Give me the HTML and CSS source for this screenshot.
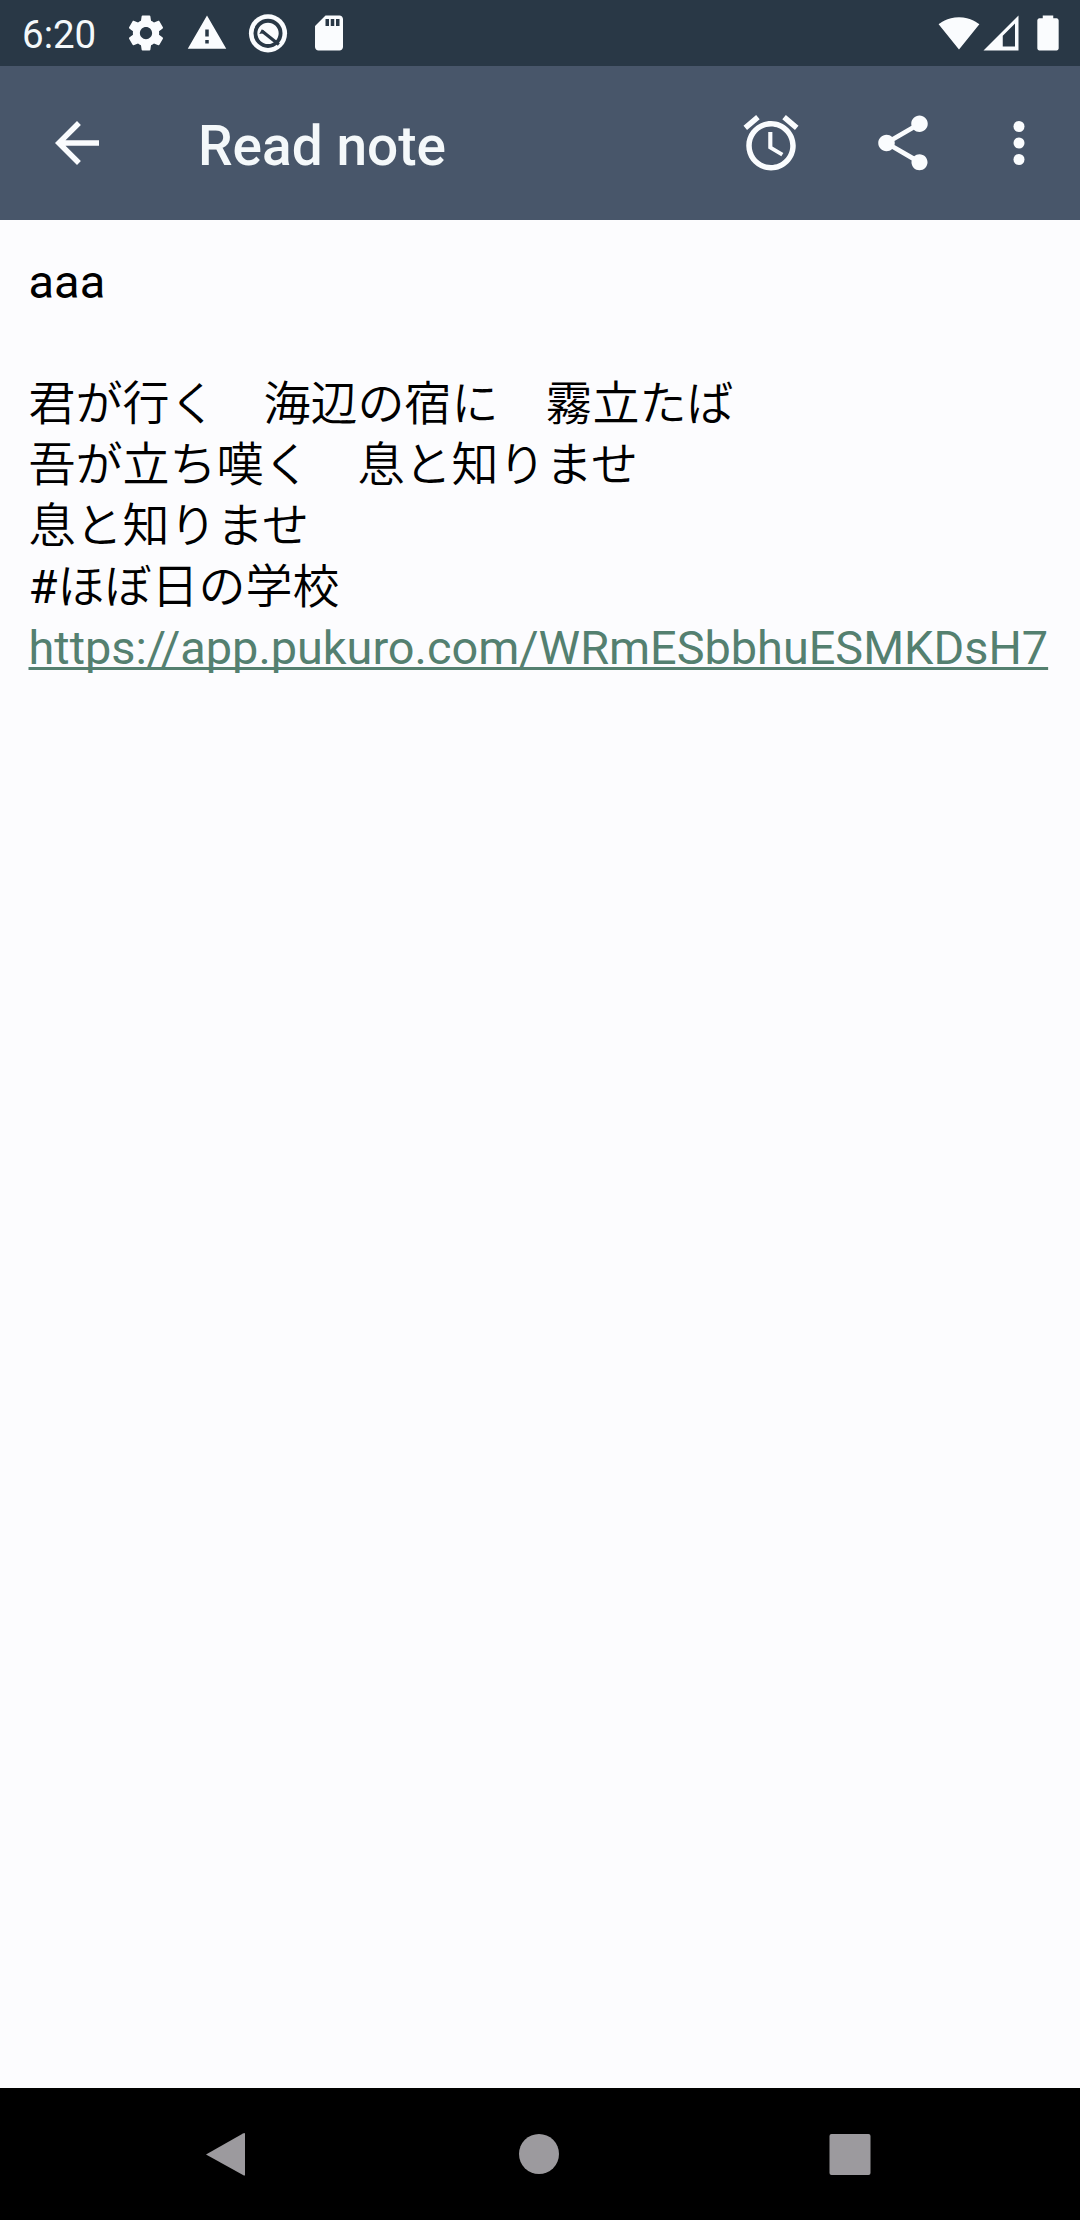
FILE: index.html
```html
<!DOCTYPE html>
<html lang="ja">
<head>
<meta charset="utf-8">
<title>Read note</title>
<link rel="stylesheet" href="styles.css">
</head>
<body>
<div class="screen">
  <header class="status">
    <span class="clock">6:20</span>
    <div class="notifications">
      <svg class="glyph" viewBox="0 0 24 24"><path d="M19.43 12.98c.04-.32.07-.64.07-.98s-.03-.66-.07-.98l2.11-1.65c.19-.15.24-.42.12-.64l-2-3.46c-.12-.22-.39-.3-.61-.22l-2.49 1c-.52-.4-1.08-.73-1.69-.98l-.38-2.65C14.46 2.18 14.25 2 14 2h-4c-.25 0-.46.18-.49.42l-.38 2.65c-.61.25-1.17.59-1.69.98l-2.49-1c-.23-.09-.49 0-.61.22l-2 3.46c-.13.22-.07.49.12.64l2.11 1.65c-.04.32-.07.65-.07.98s.03.66.07.98l-2.11 1.65c-.19.15-.24.42-.12.64l2 3.46c.12.22.39.3.61.22l2.49-1c.52.4 1.08.73 1.69.98l.38 2.65c.03.24.24.42.49.42h4c.25 0 .46-.18.49-.42l.38-2.65c.61-.25 1.17-.59 1.69-.98l2.49 1c.23.09.49 0 .61-.22l2-3.46c.12-.22.07-.49-.12-.64l-2.11-1.65zM12 15.5c-1.93 0-3.5-1.57-3.5-3.5s1.57-3.5 3.5-3.5 3.5 1.57 3.5 3.5-1.57 3.5-3.5 3.5z"/></svg>
      <svg class="glyph" viewBox="0 0 24 24"><path d="M1 21h22L12 2 1 21zm12-3h-2v-2h2v2zm0-4h-2v-4h2v4z"/></svg>
      <svg class="glyph" viewBox="0 0 24 24"><circle cx="12" cy="12.200" r="10.900"/><circle class="cut" cx="12" cy="12.200" r="7.200" stroke-width="2.200"/><path class="cut" d="M8.500 10.800L18.200 18.600" stroke-width="1.800"/><path class="cut-fill" d="M7 12.500l1.500-2.700 2.500 2z"/></svg>
      <svg class="glyph" viewBox="0 0 24 24"><path d="M18 2h-8L4.020 8 4 20c0 1.100.9 2 2 2h12c1.100 0 2-.9 2-2V4c0-1.100-.9-2-2-2zm-6 6h-2V4h2v4zm3 0h-2V4h2v4zm3 0h-2V4h2v4z"/></svg>
    </div>
    <div class="signals">
      <svg class="glyph" viewBox="0 0 24 24"><path d="M12.010 21.490L23.640 7c-.45-.34-4.930-4-11.640-4C5.280 3 .81 6.660.36 7l11.630 14.490.01.010.01-.010z"/></svg>
      <svg class="glyph" viewBox="0 0 24 24"><path fill-rule="evenodd" d="M2 22H22V2zM13 13.500L20 6.500V19.700H13z"/></svg>
      <svg class="glyph" viewBox="0 0 24 24"><path d="M16.900 3.600H15V2H9v1.600H7.100C6.400 3.600 5.900 4.200 5.900 4.900v15.800c0 .7.500 1.300 1.200 1.300h9.800c.7 0 1.200-.6 1.200-1.300V4.900c0-.7-.5-1.300-1.200-1.300z"/></svg>
    </div>
  </header>
  <nav class="toolbar">
    <svg class="action" viewBox="0 0 24 24"><path d="M20 11H7.830l5.590-5.590L12 4l-8 8 8 8 1.410-1.410L7.830 13H20v-2z"/></svg>
    <h1 class="title">Read note</h1>
    <div class="actions">
      <svg class="action" viewBox="0 0 24 24"><path d="M22 5.720l-4.600-3.860-1.290 1.530 4.600 3.860L22 5.720zM7.880 3.390L6.600 1.860 2 5.710l1.290 1.530 4.590-3.850zM12.500 8H11v6l4.750 2.850.75-1.230-4-2.370V8zM12 4c-4.970 0-9 4.030-9 9s4.020 9 9 9c4.970 0 9-4.030 9-9s-4.030-9-9-9zm0 16c-3.870 0-7-3.130-7-7s3.130-7 7-7 7 3.130 7 7-3.130 7-7 7z"/></svg>
      <svg class="action" viewBox="0 0 24 24"><path d="M18 16.080c-.76 0-1.440.3-1.960.77L8.910 12.700c.05-.23.09-.46.09-.7s-.04-.47-.09-.7l7.050-4.110c.54.5 1.250.81 2.040.81 1.660 0 3-1.340 3-3s-1.340-3-3-3-3 1.340-3 3c0 .24.04.47.09.7L8.040 9.810C7.500 9.310 6.790 9 6 9c-1.660 0-3 1.340-3 3s1.340 3 3 3c.79 0 1.500-.31 2.040-.81l7.120 4.160c-.05.21-.08.43-.08.65 0 1.610 1.310 2.920 2.920 2.920s2.920-1.310 2.920-2.920-1.310-2.920-2.920-2.920z"/></svg>
      <svg class="action more" viewBox="0 0 24 24"><circle cx="12" cy="6" r="2"/><circle cx="12" cy="12" r="2"/><circle cx="12" cy="18" r="2"/></svg>
    </div>
  </nav>
  <main class="note">
    <p class="latin">aaa</p>
    <p>&nbsp;</p>
    <p>君が行く　海辺の宿に　霧立たば</p>
    <p>吾が立ち嘆く　息と知りませ</p>
    <p>息と知りませ</p>
    <p><span class="latin">#</span>ほぼ日の学校</p>
    <p><a class="link" href="#">https://app.pukuro.com/WRmESbbhuESMKDsH7</a></p>
  </main>
  <footer class="navbar">
    <svg class="key" viewBox="0 0 44 44"><path d="M1 22.500L38 1.500Q40 .500 40 2V43Q40 44 38 43z"/></svg>
    <svg class="key" viewBox="0 0 44 44"><circle cx="22" cy="22" r="20"/></svg>
    <svg class="key" viewBox="0 0 44 44"><rect x="1.500" y="2" width="41" height="41" rx="2"/></svg>
  </footer>
</div>
</body>
</html>
```
FILE: styles.css
```css
body {
  margin: 0;
  font-family: Roboto, "Noto Sans CJK JP", sans-serif;
}
.screen {
  display: flex;
  flex-direction: column;
  width: 1080px;
  height: 2220px;
  background: #fcfcfe;
}
svg {
  display: block;
  flex: none;
  fill: #fafcfe;
}
.status {
  display: flex;
  align-items: center;
  height: 66px;
  padding: 0 11.5px 0 22px;
  box-sizing: border-box;
  background: #293846;
  color: #f4f8fa;
}
.clock {
  width: 103px;
  font-size: 38.5px;
  line-height: 66px;
  padding-top: 3px;
}
.notifications {
  display: flex;
  gap: 19px;
}
.glyph {
  width: 42px;
  height: 42px;
}
.cut {
  fill: none;
  stroke: #293846;
}
.cut-fill {
  fill: #293846;
}
.signals {
  display: flex;
  margin-left: auto;
}
.signals .glyph:last-child {
  margin-left: 5px;
}
.toolbar {
  display: flex;
  align-items: center;
  height: 154px;
  padding: 0 28px 0 44px;
  box-sizing: border-box;
  background: #48566a;
}
.action {
  width: 66px;
  height: 66px;
}
.title {
  margin: 6px 0 0 88px;
  font-size: 55px;
  font-weight: 500;
  line-height: 66px;
  color: #f4f8fa;
}
.actions {
  display: flex;
  gap: 66px;
  margin-left: auto;
}
.more {
  margin-left: -16px;
}
.note {
  flex: 1;
  padding: 31px 28px 0 28.5px;
  font-size: 47px;
  font-weight: 350;
  color: #000;
}
.note p {
  margin: 0;
  height: 61px;
  line-height: 61px;
  white-space: nowrap;
}
.latin {
  font-weight: 400;
}
.link {
  font-size: 46.85px;
  font-weight: 400;
  color: #548070;
  text-decoration: underline;
  text-decoration-thickness: 3px;
  text-underline-offset: 3px;
  text-decoration-skip-ink: none;
}
.navbar {
  display: flex;
  justify-content: space-between;
  align-items: center;
  height: 132px;
  padding: 0 208px 0 205px;
  box-sizing: border-box;
  background: #000;
}
.key {
  width: 44px;
  height: 44px;
  fill: #9c9a9e;
}
```
